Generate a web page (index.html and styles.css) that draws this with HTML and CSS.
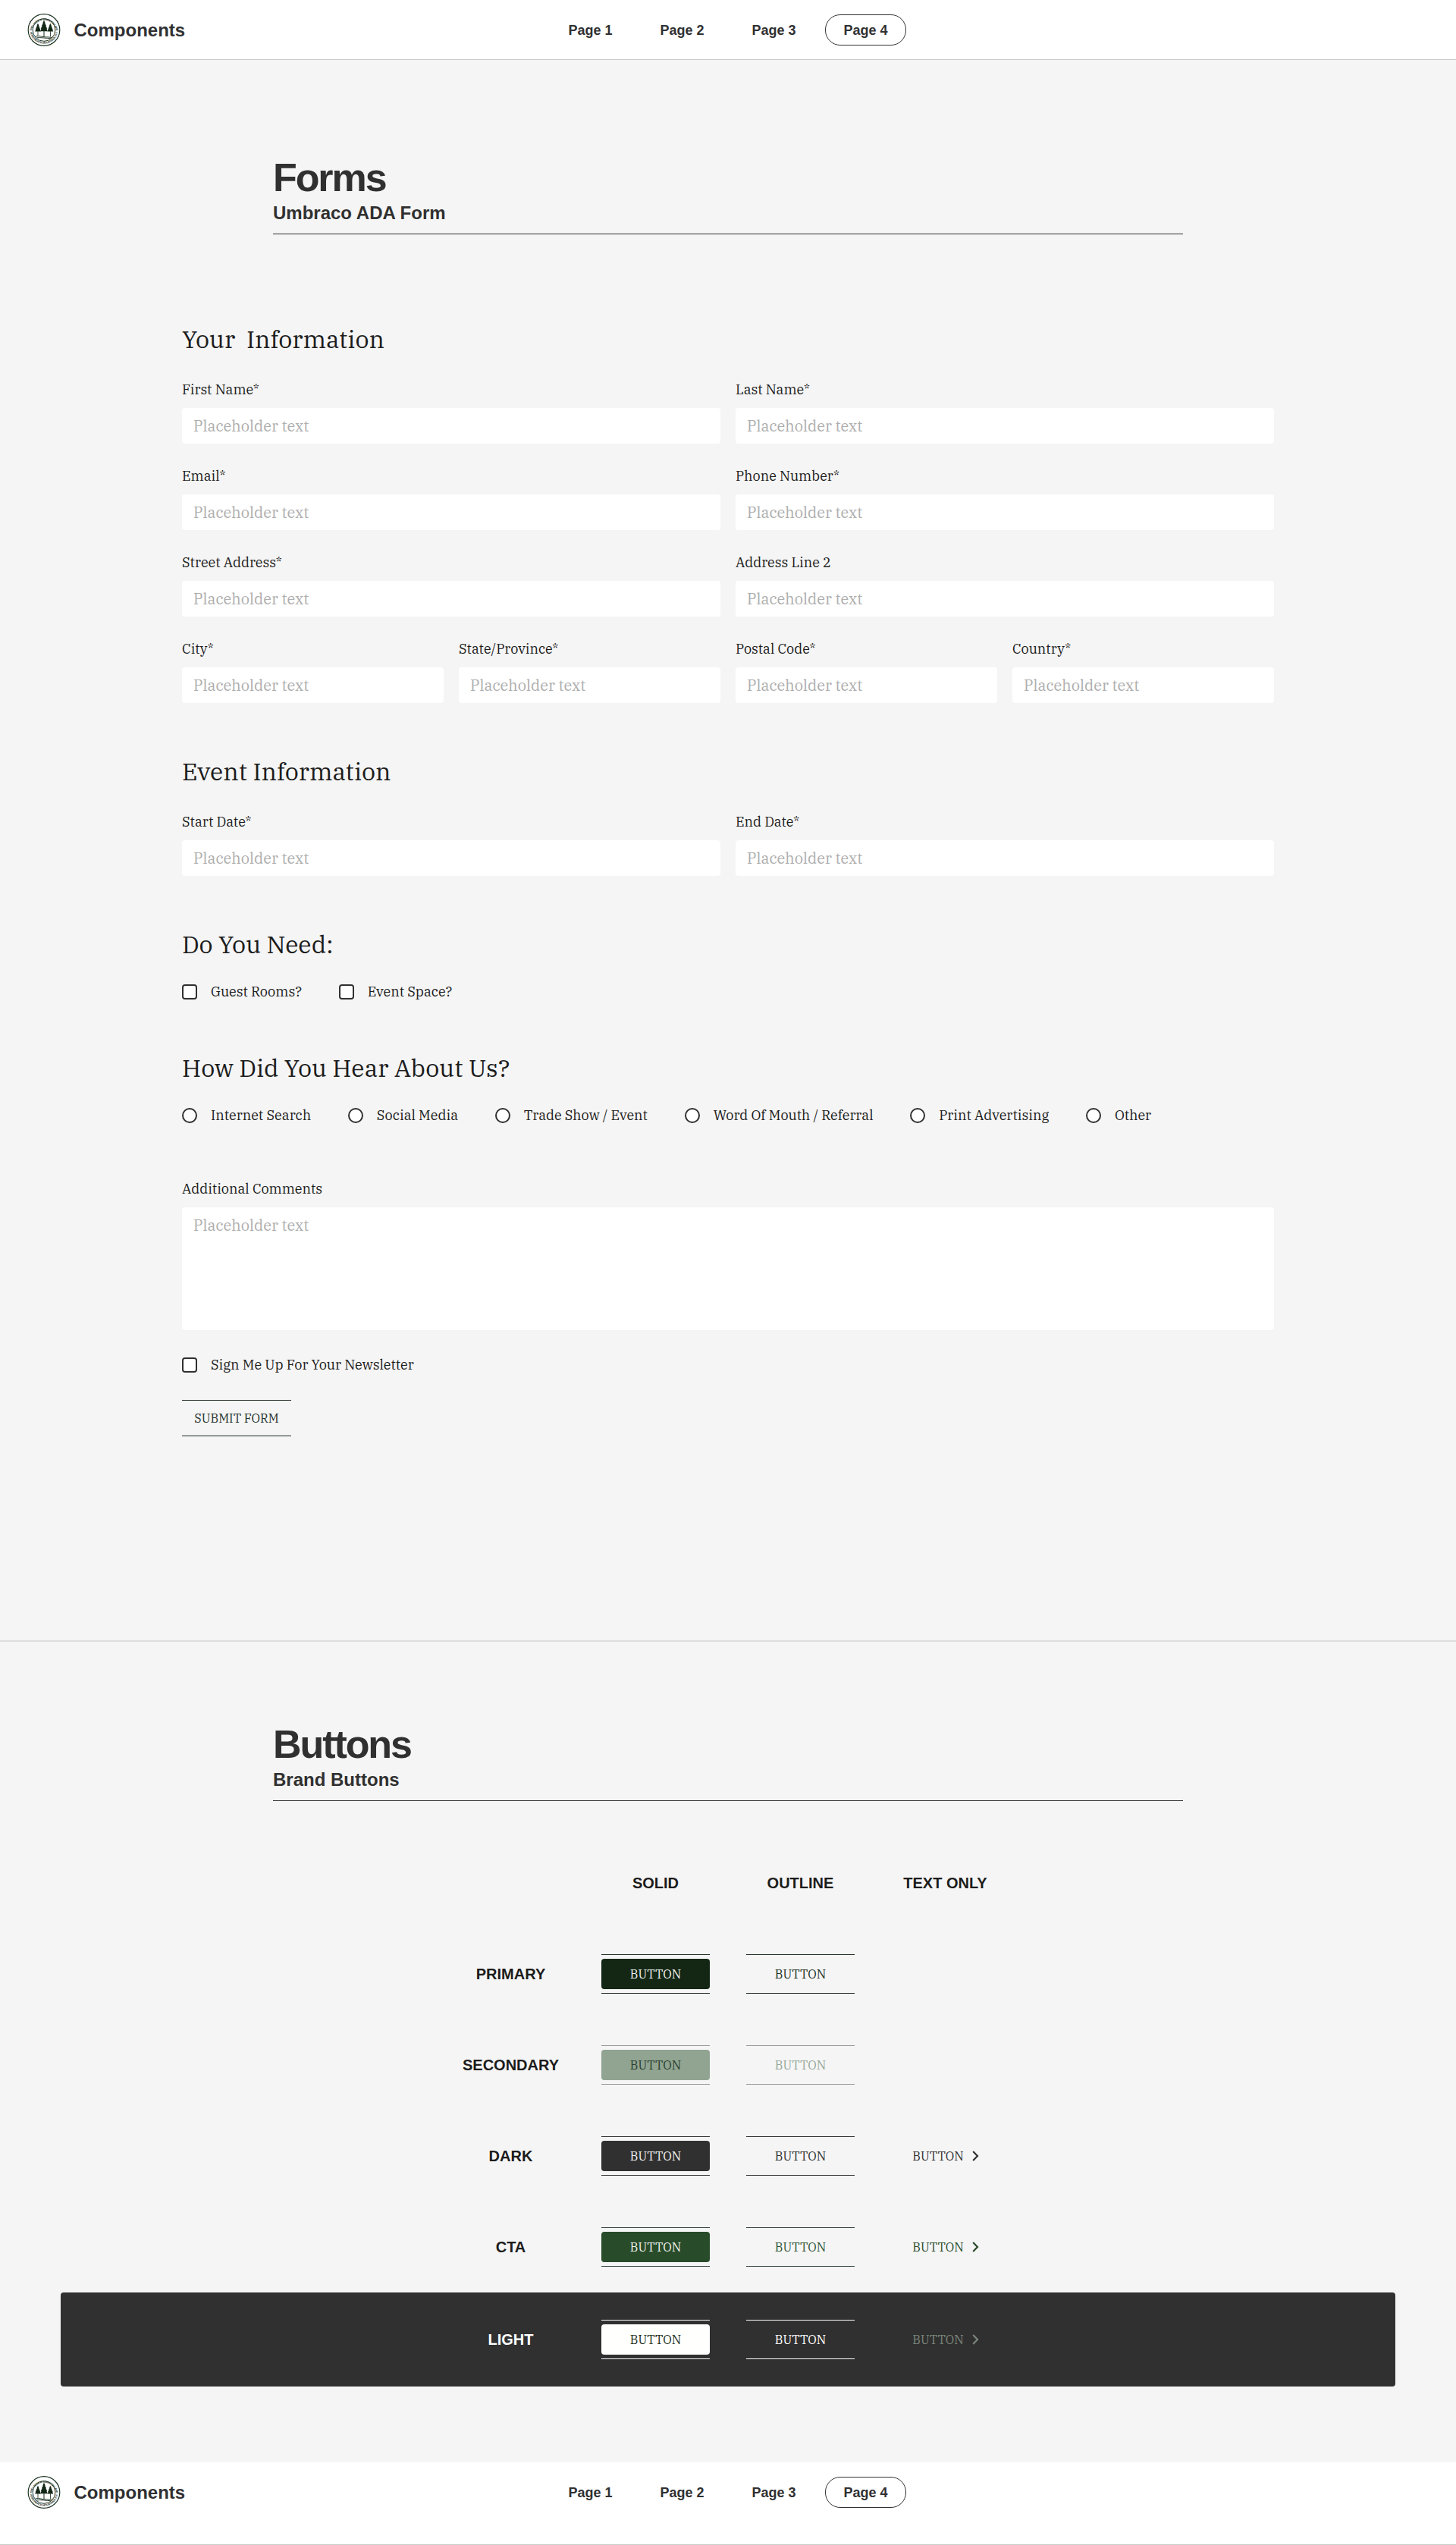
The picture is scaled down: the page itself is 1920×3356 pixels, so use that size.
FILE: index.html
```
<!DOCTYPE html>
<html lang="en">
<head>
<meta charset="utf-8">
<title>Components</title>
<link rel="stylesheet" href="styles.css">
</head>
<body>
<svg width="0" height="0" class="defs" aria-hidden="true">
  <defs>
    <path id="arc-top" d="M5.7 23.6A16.4 16.4 0 0 1 38.3 23.6"/>
    <path id="arc-bottom" d="M3.3 24.5A18.9 18.9 0 0 0 40.7 24.5"/>
    <symbol id="logo" viewBox="0 0 44 44">
      <g fill="none" stroke="#1d3323">
        <circle cx="22" cy="22" r="21.3" stroke-width="1.2"/>
        <circle cx="22" cy="22" r="15.2" stroke-width="1"/>
        <path d="M10.8 30.6c5-1.3 8 .9 12 .9s6.500.3 10 .7M12.500 32.5c5-.6 13 .8 18.500 1" stroke-width="1"/>
      </g>
      <g fill="#142817">
        <path d="M22 9l1.900 4h-.7l2 3.700h-.8l2 3.600h-.9l1.500 3.400h-4.500v8h-1v-8H17l1.500-3.400h-.9l2-3.600h-.8l2-3.700h-.7z"/>
        <path d="M13.800 13l1.500 3.200h-.5l1.500 2.700h-.5l1.400 2.700h-.5l1 2.500h-3.500v6.500h-.8v-6.500H9.900l1-2.500h-.5l1.400-2.700h-.5l1.500-2.700h-.5zM30.600 13l1.500 3.200h-.5l1.500 2.700h-.5l1.400 2.700h-.5l1 2.500H31v7h-.8v-7h-3.500l1-2.500h-.5l1.400-2.700h-.5l1.500-2.700h-.5z"/>
      </g>
      <g class="seal">
        <text><textPath href="#arc-top" startOffset="50%" text-anchor="middle" textLength="47">THE LODGE AT SCHROON LAKE</textPath></text>
        <text><textPath href="#arc-bottom" startOffset="50%" text-anchor="middle" textLength="53">ADIRONDACK MOUNTAINS, N.Y.</textPath></text>
      </g>
    </symbol>
    <symbol id="chevron" viewBox="0 0 9 14">
      <path d="M1.200 1l5.800 6-5.800 6" fill="none" stroke="currentColor" stroke-width="2.200"/>
    </symbol>
  </defs>
</svg>

<header class="bar">
  <div class="brand"><svg class="logo"><use href="#logo"/></svg><span>Components</span></div>
  <nav class="nav"><a>Page 1</a><a>Page 2</a><a>Page 3</a><a class="active">Page 4</a></nav>
</header>

<section class="forms">
  <div class="title"><h1>Forms</h1><h2>Umbraco ADA Form</h2></div>
  <form class="form">
    <h3>Your&nbsp; Information</h3>
    <div class="fields">
      <label class="field half"><span>First Name*</span><input type="text" placeholder="Placeholder text"></label>
      <label class="field half"><span>Last Name*</span><input type="text" placeholder="Placeholder text"></label>
      <label class="field half"><span>Email*</span><input type="text" placeholder="Placeholder text"></label>
      <label class="field half"><span>Phone Number*</span><input type="text" placeholder="Placeholder text"></label>
      <label class="field half"><span>Street Address*</span><input type="text" placeholder="Placeholder text"></label>
      <label class="field half"><span>Address Line 2</span><input type="text" placeholder="Placeholder text"></label>
      <label class="field"><span>City*</span><input type="text" placeholder="Placeholder text"></label>
      <label class="field"><span>State/Province*</span><input type="text" placeholder="Placeholder text"></label>
      <label class="field"><span>Postal Code*</span><input type="text" placeholder="Placeholder text"></label>
      <label class="field"><span>Country*</span><input type="text" placeholder="Placeholder text"></label>
    </div>
    <h3>Event Information</h3>
    <div class="fields">
      <label class="field half"><span>Start Date*</span><input type="text" placeholder="Placeholder text"></label>
      <label class="field half"><span>End Date*</span><input type="text" placeholder="Placeholder text"></label>
    </div>
    <h3>Do You Need:</h3>
    <div class="choices">
      <label class="choice"><input type="checkbox">Guest Rooms?</label>
      <label class="choice"><input type="checkbox">Event Space?</label>
    </div>
    <h3>How Did You Hear About Us?</h3>
    <div class="choices last">
      <label class="choice"><input type="radio" name="source">Internet Search</label>
      <label class="choice"><input type="radio" name="source">Social Media</label>
      <label class="choice"><input type="radio" name="source">Trade Show / Event</label>
      <label class="choice"><input type="radio" name="source">Word Of Mouth / Referral</label>
      <label class="choice"><input type="radio" name="source">Print Advertising</label>
      <label class="choice"><input type="radio" name="source">Other</label>
    </div>
    <label class="field"><span>Additional Comments</span><textarea placeholder="Placeholder text"></textarea></label>
    <label class="choice newsletter"><input type="checkbox">Sign Me Up For Your Newsletter</label>
    <button type="button" class="submit">SUBMIT FORM</button>
  </form>
</section>

<section class="buttons">
  <div class="title"><h1>Buttons</h1><h2>Brand Buttons</h2></div>
  <div class="table">
    <div class="row"><b></b><b>SOLID</b><b>OUTLINE</b><b>TEXT ONLY</b></div>
    <div class="row primary"><b>PRIMARY</b><a class="btn"><span class="solid">BUTTON</span></a><a class="btn"><span>BUTTON</span></a></div>
    <div class="row secondary"><b>SECONDARY</b><a class="btn"><span class="solid">BUTTON</span></a><a class="btn"><span>BUTTON</span></a></div>
    <div class="row dark"><b>DARK</b><a class="btn"><span class="solid">BUTTON</span></a><a class="btn"><span>BUTTON</span></a><a class="link">BUTTON<svg><use href="#chevron"/></svg></a></div>
    <div class="row cta"><b>CTA</b><a class="btn"><span class="solid">BUTTON</span></a><a class="btn"><span>BUTTON</span></a><a class="link">BUTTON<svg><use href="#chevron"/></svg></a></div>
    <div class="row light"><b>LIGHT</b><a class="btn"><span class="solid">BUTTON</span></a><a class="btn"><span>BUTTON</span></a><a class="link">BUTTON<svg><use href="#chevron"/></svg></a></div>
  </div>
</section>

<footer class="bar bottom">
  <div class="brand"><svg class="logo"><use href="#logo"/></svg><span>Components</span></div>
  <nav class="nav"><a>Page 1</a><a>Page 2</a><a>Page 3</a><a class="active">Page 4</a></nav>
</footer>
</body>
</html>
```
FILE: styles.css
```
* { box-sizing: border-box; }
body {
  margin: 0;
  background: #f5f5f5;
  color: #1c1c1c;
  font-family: "Liberation Sans", Arial, sans-serif;
}
h1, h2, h3 { margin: 0; }
.defs { position: absolute; }

.bar {
  display: grid;
  grid-template-columns: 1fr auto 1fr;
  align-items: start;
  height: 79px;
  padding: 18px 36px 0;
  background: #fff;
  border-bottom: 1px solid #ccc;
  color: #303032;
  font-weight: 700;
}
.bar.bottom { height: 109px; }
.brand { display: flex; align-items: center; gap: 17.5px; height: 43px; font-size: 24px; }
.logo { width: 44px; height: 43px; }
.seal text {
  font: 700 3.8px "Liberation Sans", Arial, sans-serif;
  fill: #1d3323;
}
.nav { display: flex; align-items: center; gap: 14px; height: 43px; font-size: 18px; }
.nav a {
  width: 107px;
  height: 41px;
  line-height: 40px;
  text-align: center;
  border: 1px solid transparent;
  border-radius: 20px;
}
.nav .active { border-color: #303032; }

.title { width: 1200px; margin: 0 auto; height: 101px; border-bottom: 1px solid #2f2f2f; color: #303030; }
.title h1 { font-size: 52px; line-height: 52px; letter-spacing: -0.04em; }
.title h2 { margin-top: 6px; font-size: 24px; line-height: 29px; }

.forms { height: 2086px; padding-top: 129px; border-bottom: 2px solid #ddd; }
.form {
  width: 1440px;
  margin: 118px auto 0;
  font-family: "IBM Plex Serif", "Noto Serif", "DejaVu Serif Condensed", serif;
}
.form h3 { font-size: 32px; line-height: 40px; font-weight: 400; }
.fields { display: grid; grid-template-columns: repeat(4, 1fr); gap: 31px 20px; margin: 35px 0 70px; }
.field { display: flex; flex-direction: column; gap: 12px; font-size: 18px; line-height: 24px; }
.half { grid-column: span 2; }
.field input, .field textarea {
  width: 100%;
  height: 47px;
  padding: 0 15px;
  border: 0;
  border-radius: 4px;
  background: #fff;
  font: 20px/26px "IBM Plex Serif", "Noto Serif", "DejaVu Serif Condensed", serif;
}
.field textarea { height: 162px; padding: 11px 15px; resize: none; }
::placeholder { color: #aeaeae; opacity: 1; }

.choices { display: flex; gap: 48.7px; margin: 33px 0 70px; }
.choices.last { margin-bottom: 75px; }
.choice { display: flex; gap: 18px; height: 20px; font-size: 18px; line-height: 20px; white-space: nowrap; }
.choice input {
  appearance: none;
  width: 20px;
  height: 20px;
  margin: 0;
  border: 2px solid #303030;
  border-radius: 4px;
  background: #fff;
}
.choice input[type="radio"] { border-radius: 50%; }
.newsletter { margin: 36px 0; }
.submit {
  display: block;
  width: 144px;
  height: 48px;
  padding: 0;
  border: solid #1f2a22;
  border-width: 1px 0;
  background: none;
  color: #24302a;
  font: 16px/46px "IBM Plex Serif", "Noto Serif", "DejaVu Serif Condensed", serif;
}

.buttons { height: 1082px; padding-top: 109px; }
.table { margin: 48px 80px 0; }
.row {
  display: grid;
  grid-template-columns: repeat(4, 191px);
  justify-content: center;
  place-items: center;
  height: 120px;
}
.row b { font-size: 20px; line-height: 24px; }
.btn {
  display: block;
  width: 143px;
  height: 52px;
  padding: 5px 0;
  border: solid var(--line);
  border-width: 1px 0;
}
.btn span { display: block; height: 40px; border-radius: 4px; text-align: center; color: var(--text); }
.btn .solid { background: var(--fill); color: var(--on-fill); }
.btn, .link { font: 16px/40px "IBM Plex Serif", "Noto Serif", "DejaVu Serif Condensed", serif; }
.link { display: flex; align-items: center; gap: 11px; padding-left: 1px; color: var(--link); }
.link svg { width: 9px; height: 14px; }

.primary { --line: #1c2a1f; --fill: #142715; --on-fill: #f0f2ee; --text: #1d3021; }
.secondary { --line: #969996; --fill: #90a491; --on-fill: #2c3f30; --text: #97a899; }
.dark { --line: #303030; --fill: #303030; --on-fill: #f3f3f3; --text: #303030; --link: #303030; }
.cta { --line: #32413a; --fill: #284b2a; --on-fill: #f0f3ee; --text: #315436; --link: #284b2a; }
.light {
  --line: #fff; --fill: #fffffd; --on-fill: #1d3021; --text: #fff; --link: #7c867d;
  height: 124px;
  background: #303030;
  border-radius: 4px;
}
.light b { color: #fff; }
```
